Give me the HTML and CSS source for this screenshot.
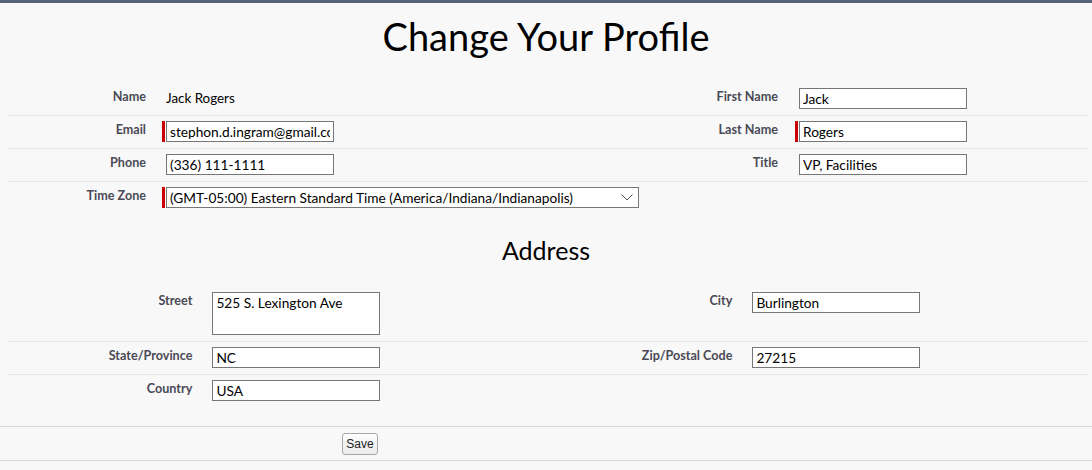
FILE: index.html
```html
<!DOCTYPE html>
<html>
<head>
<meta charset="utf-8">
<link rel="stylesheet" href="styles.css">
</head>
<body>
<div class="topbar"></div>
<h1 class="title">Change Your Profile</h1>
<div class="section top">
  <div class="row sep">
    <div class="label">Name</div>
    <div class="data"><span class="value">Jack Rogers</span></div>
    <div class="label">First Name</div>
    <div class="data"><input class="field" type="text" value="Jack"></div>
  </div>
  <div class="row sep">
    <div class="label">Email</div>
    <div class="data"><span class="req"><span class="bar"></span><input class="field" type="text" value="stephon.d.ingram@gmail.com"></span></div>
    <div class="label">Last Name</div>
    <div class="data"><span class="req"><span class="bar"></span><input class="field" type="text" value="Rogers"></span></div>
  </div>
  <div class="row sep">
    <div class="label">Phone</div>
    <div class="data"><input class="field" type="text" value="(336) 111-1111"></div>
    <div class="label">Title</div>
    <div class="data"><input class="field" type="text" value="VP, Facilities"></div>
  </div>
  <div class="row">
    <div class="label">Time Zone</div>
    <div class="data wide"><span class="req"><span class="bar"></span><span class="select"><span class="seltext">(GMT-05:00) Eastern Standard Time (America/Indiana/Indianapolis)</span><svg class="chev" width="12" height="7" viewBox="0 0 12 7"><path d="M0.5 0.5 L6 6 L11.5 0.5" fill="none" stroke="#555" stroke-width="1"/></svg></span></span></div>
  </div>
</div>
<h2 class="subtitle">Address</h2>
<div class="section addr">
  <div class="row sep">
    <div class="label">Street</div>
    <div class="data"><textarea class="field area">525 S. Lexington Ave</textarea></div>
    <div class="label">City</div>
    <div class="data"><input class="field" type="text" value="Burlington"></div>
  </div>
  <div class="row sep">
    <div class="label">State/Province</div>
    <div class="data"><input class="field" type="text" value="NC"></div>
    <div class="label">Zip/Postal Code</div>
    <div class="data"><input class="field" type="text" value="27215"></div>
  </div>
  <div class="row">
    <div class="label">Country</div>
    <div class="data"><input class="field" type="text" value="USA"></div>
    <div class="label"></div>
    <div class="data"></div>
  </div>
</div>
<div class="footer">
  <button class="btn" type="button">Save</button>
</div>
</body>
</html>
```
FILE: styles.css
```css
html, body {
  margin: 0;
  padding: 0;
  background: #f8f8f8;
  font-family: Lato, "Open Sans", sans-serif;
  color: #000;
}
.topbar {
  height: 3px;
  background: #56657a;
}
.title {
  margin: 12px 0 0 0;
  height: 68px;
  line-height: 42px;
  font-size: 38px;
  font-weight: 400;
  text-align: center;
  color: #000;
}
.section {
  margin: 0 4px 0 8px;
}
.row {
  display: grid;
  padding: 5px 0 6px 0;
  align-items: start;
}
.top .row {
  grid-template-columns: 148px 485px 148px 1fr;
}
.addr .row {
  grid-template-columns: 18% 32% 18% 32%;
}
.row.sep {
  border-bottom: 1px solid #e6e6e6;
}
.label {
  text-align: right;
  padding-right: 10px;
  padding-top: 1px;
  font-size: 12.6px;
  line-height: 15px;
  font-weight: 700;
  color: #4a4a56;
}
.top .row .label:nth-child(3) {
  padding-right: 11px;
}
.data {
  padding-left: 10px;
  min-height: 21px;
  display: flex;
  align-items: flex-start;
}
.value {
  font-size: 13.4px;
  line-height: 21px;
}
.req {
  position: relative;
  display: inline-flex;
}
.bar {
  position: absolute;
  left: -4px;
  top: 0;
  bottom: 0;
  width: 3px;
  background: #c00;
}
.field {
  box-sizing: border-box;
  width: 168px;
  height: 21px;
  margin: 0;
  padding: 0 3px;
  border: 1px solid #767676;
  background: #fff;
  font-family: Lato, "Open Sans", sans-serif;
  font-size: 13.7px;
  color: #000;
  outline: none;
}
.area {
  height: 43px;
  padding: 2px 3px;
  resize: none;
  line-height: 16px;
  overflow: hidden;
}
.select {
  box-sizing: border-box;
  width: 473px;
  height: 21px;
  border: 1px solid #767676;
  background: #fff;
  display: flex;
  align-items: center;
  justify-content: space-between;
  padding: 0 5px 0 3px;
  font-size: 13.7px;
  white-space: nowrap;
}
.chev {
  display: block;
}
.subtitle {
  margin: 21px 0 22px 0;
  font-size: 25px;
  line-height: 30px;
  font-weight: 400;
  text-align: center;
}
.footer {
  margin-top: 19px;
  border-top: 1px solid #d8d8d8;
  border-bottom: 1px solid #d8d8d8;
  padding: 6px 0 5px 342px;
}
.btn {
  box-sizing: border-box;
  height: 22px;
  width: 36px;
  padding: 0;
  border: 1px solid #a8a8a8;
  border-radius: 3px;
  background: linear-gradient(#fdfdfd, #ececec);
  font-family: "Liberation Sans", Arial, sans-serif;
  font-size: 12px;
  color: #222;
  display: block;
}
```
